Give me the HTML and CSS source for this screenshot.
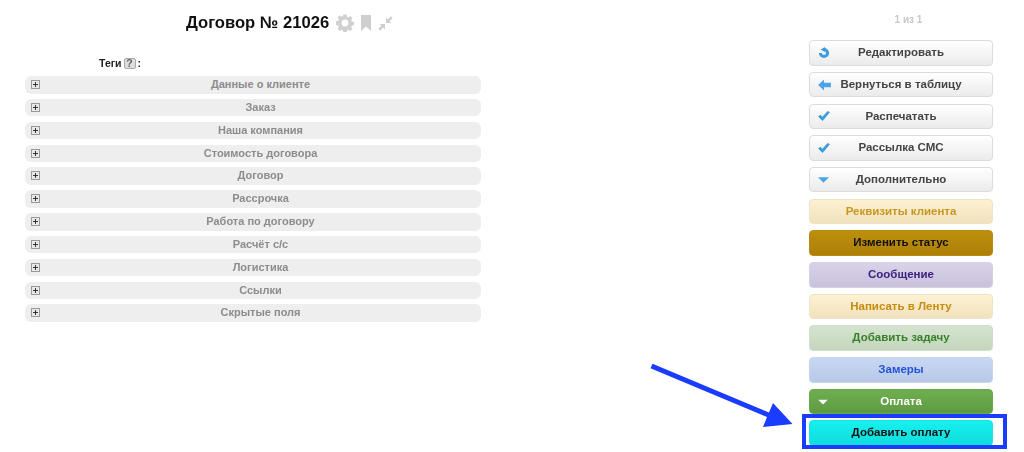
FILE: index.html
```html
<!DOCTYPE html>
<html lang="en">
<head>
  <meta charset="UTF-8">
  <meta name="viewport" content="width=device-width, initial-scale=1.0">
  <title>Договор № 21026</title>
  <link rel="stylesheet" href="styles.css">
</head>
<body>

  <div class="page">
    <div class="main">
      <div class="title-row">
        <h1>Договор № 21026</h1>
        <svg class="title-icon" width="18" height="18" viewBox="0 0 18 18"><path fill-rule="evenodd" fill="#d0d0d0" d="M7.400 0.500h3.200l.4 2.300 1.300.6 2-1.300 2.200 2.200-1.300 2 .6 1.300 2.300.4v3.200l-2.300.4-.6 1.300 1.300 2-2.200 2.200-2-1.300-1.300.6-.4 2.300H7.400l-.4-2.300-1.300-.6-2 1.300-2.200-2.200 1.300-2-.6-1.300-2.300-.4V7.300l2.300-.4.6-1.300-1.300-2 2.200-2.200 2 1.300 1.300-.6zM9 5.600a3.400 3.400 0 1 0 0 6.800 3.400 3.400 0 0 0 0-6.800z"/></svg>
        <svg class="title-icon" width="10" height="16" viewBox="0 0 10 16"><path fill="#cfcfcf" d="M0 0h10v16L5 11.500 0 16z"/></svg>
        <svg class="title-icon" width="15" height="15" viewBox="0 0 14 14"><path fill="#cfcfcf" d="M7.500 6.500V1.500l1.700 1.700L12 .3l1.700 1.700-2.900 2.800 1.700 1.700zM6.500 7.500v5l-1.700-1.700L2 13.700.3 12l2.900-2.800-1.700-1.700z"/></svg>
      </div>
      <div class="tags">Теги <span class="help">?</span> :</div>
      <div class="sections">
        <div class="section"><span class="plus"></span>Данные о клиенте</div>
        <div class="section"><span class="plus"></span>Заказ</div>
        <div class="section"><span class="plus"></span>Наша компания</div>
        <div class="section"><span class="plus"></span>Стоимость договора</div>
        <div class="section"><span class="plus"></span>Договор</div>
        <div class="section"><span class="plus"></span>Рассрочка</div>
        <div class="section"><span class="plus"></span>Работа по договору</div>
        <div class="section"><span class="plus"></span>Расчёт с/с</div>
        <div class="section"><span class="plus"></span>Логистика</div>
        <div class="section"><span class="plus"></span>Ссылки</div>
        <div class="section"><span class="plus"></span>Скрытые поля</div>
      </div>
    </div>

    <div class="side">
      <div class="pager">1 из 1</div>
      <a class="btn">
        <svg class="btn-icon" width="12" height="12" viewBox="0 0 12 12"><path fill="none" stroke="#3d9be0" stroke-width="3" d="M6 2.400a3.600 3.600 0 1 1-3.600 3.600"/><path fill="#3d9be0" d="M7 0v5L2.500 2.500z"/></svg>
        Редактировать
      </a>
      <a class="btn">
        <svg class="btn-icon" width="13" height="11" viewBox="0 0 14 12"><path fill="#4aa5e8" d="M6.500 0v3.500H14v5H6.500V12L0 6z"/></svg>
        Вернуться в таблицу
      </a>
      <a class="btn">
        <svg class="btn-icon" width="12" height="10" viewBox="0 0 13 11"><path fill="#3d9be0" d="M0 6l2.500-2 2.300 2.300L10.500 0 13 1.500 5 11z"/></svg>
        Распечатать
      </a>
      <a class="btn">
        <svg class="btn-icon" width="12" height="10" viewBox="0 0 13 11"><path fill="#3d9be0" d="M0 6l2.500-2 2.300 2.300L10.500 0 13 1.500 5 11z"/></svg>
        Рассылка СМС
      </a>
      <a class="btn">
        <svg class="btn-icon" width="11" height="6" viewBox="0 0 12 6"><path fill="#4aa5e8" d="M0 0h12L6 6z"/></svg>
        Дополнительно
      </a>
      <a class="btn btn-cream">Реквизиты клиента</a>
      <a class="btn btn-gold">Изменить статус</a>
      <a class="btn btn-violet">Сообщение</a>
      <a class="btn btn-cream btn-feed">Написать в Ленту</a>
      <a class="btn btn-green">Добавить задачу</a>
      <a class="btn btn-blue">Замеры</a>
      <a class="btn btn-pay">
        <svg class="btn-icon" width="10" height="5" viewBox="0 0 10 5"><path fill="#fff" d="M0 0h10L5 5z"/></svg>
        Оплата
      </a>
      <a class="btn btn-cyan">Добавить оплату</a>
    </div>
  </div>

  <!-- annotation drawn over the screenshot -->
  <svg class="arrow" width="150" height="70" viewBox="0 0 150 70"><path fill="#1a3cff" d="M3.500 1.700L120 50.500 124 41 143.500 62 114 65 118 55.100 1.500 6.300z"/></svg>
  <div class="highlight"></div>

</body>
</html>
```

FILE: styles.css
```css
body {
  font-family: "Liberation Sans", Arial, sans-serif;
  background-color: #fff;
  margin: 0;
  height: 452px;
  overflow: hidden;
}
.page {
  display: flex;
  justify-content: space-between;
  padding-left: 25px;
  padding-right: 31px;
  filter: blur(0.45px);
}
.main {
  width: 456px;
}
.title-row {
  display: flex;
  align-items: center;
  gap: 7px;
  height: 20px;
  margin-top: 13px;
  padding-left: 161px;
}
h1 {
  font-size: 16.6px;
  line-height: 20px;
  color: #111;
  margin: 0;
}
.tags {
  display: flex;
  align-items: center;
  gap: 2px;
  font-size: 10.5px;
  font-weight: bold;
  line-height: 14px;
  color: #222;
  margin-top: 23px;
  padding-left: 74px;
}
.help {
  width: 10px;
  height: 9px;
  background-color: #ddd;
  border: 1px solid #aaa;
  border-radius: 2px;
  color: #666;
  text-align: center;
  line-height: 9px;
}
.sections {
  display: flex;
  flex-direction: column;
  gap: 5.3px;
  margin-top: 6px;
}
.section {
  position: relative;
  height: 17.55px;
  line-height: 17.5px;
  padding-left: 15px;
  background-color: #eee;
  border-radius: 6px;
  font-size: 11px;
  font-weight: bold;
  color: #8c8c8c;
  text-align: center;
}
.plus {
  position: absolute;
  left: 6px;
  top: 4px;
  width: 7px;
  height: 7px;
  border: 1px solid #999;
  background:
    linear-gradient(#333, #333) center / 5px 1px no-repeat,
    linear-gradient(#333, #333) center / 1px 5px no-repeat,
    #e8e8e8;
}
.side {
  width: 184px;
  display: flex;
  flex-direction: column;
  gap: 6.2px;
}
.pager {
  font-size: 10px;
  font-weight: bold;
  line-height: 12px;
  color: #c8c8c8;
  text-align: center;
  margin-top: 14px;
  margin-bottom: 8px;
  padding-left: 15px;
}
.btn {
  position: relative;
  display: block;
  height: 25.5px;
  box-sizing: border-box;
  line-height: 23.5px;
  border: 1px solid #dcdcdc;
  border-radius: 4px;
  background: linear-gradient(#fff, #ebebeb);
  font-size: 11.5px;
  font-weight: bold;
  color: #444;
  text-align: center;
}
.btn-icon {
  position: absolute;
  left: 8px;
  top: 50%;
  transform: translateY(-50%);
}
.btn-cream {
  background: linear-gradient(#fdf1d2, #f1e2bd);
  border-color: #eee3c8;
  color: #c8971f;
}
.btn-feed {
  color: #c48c10;
}
.btn-gold {
  background: linear-gradient(#bd8f0d, #ad7f08);
  border-color: #b98c10;
  color: #111;
}
.btn-violet {
  background: linear-gradient(#d9d2e8, #c9c1dc);
  border-color: #d6d0e2;
  color: #3b2080;
}
.btn-green {
  background: linear-gradient(#d5e3cf, #c3d6bc);
  border-color: #d0dfcb;
  color: #37802a;
}
.btn-blue {
  background: linear-gradient(#c9d8f2, #b7c9e8);
  border-color: #c6d5ec;
  color: #2553d8;
}
.btn-pay {
  background: linear-gradient(#6fae50, #5e9a43);
  border-color: #6aa84c;
  color: #fff;
}
.btn-cyan {
  background: linear-gradient(#17f0f0, #0fdcdc);
  border-color: #14e6e6;
  color: #111;
}
.arrow {
  position: absolute;
  left: 649px;
  top: 362px;
}
.highlight {
  position: absolute;
  left: 802px;
  top: 414px;
  width: 205px;
  height: 35px;
  box-sizing: border-box;
  border: 4px solid #1a3cff;
}
```
